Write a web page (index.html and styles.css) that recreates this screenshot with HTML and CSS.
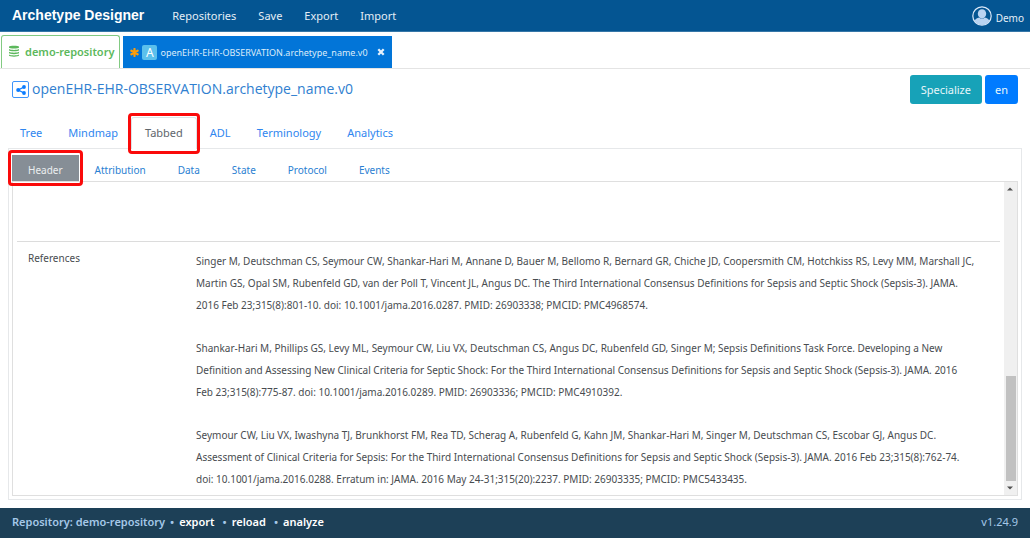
FILE: index.html
```html
<!DOCTYPE html>
<html lang="en">
<head>
<meta charset="utf-8">
<title>Archetype Designer</title>
<link rel="stylesheet" href="styles.css">
</head>
<body>
<header class="topbar">
  <a class="brand" href="#">Archetype Designer</a>
  <nav class="menu">
    <a href="#">Repositories</a>
    <a href="#">Save</a>
    <a href="#">Export</a>
    <a href="#">Import</a>
  </nav>
  <a class="user" href="#">
    <svg class="avatar" viewBox="0 0 20 20" aria-hidden="true">
      <circle cx="10" cy="10" r="9.2" fill="none" stroke="#dbe8f8" stroke-width="1.2"/>
      <ellipse cx="10" cy="7.800" rx="4.200" ry="4.600" fill="#b9d3f1"/>
      <path d="M2.600 15.200C3 12.800 5 12 7.200 11.400c1.600 1.600 4 1.600 5.600 0C15 12 17 12.800 17.400 15.200A9 9 0 0 1 2.600 15.200z" fill="#b9d3f1"/>
    </svg>
    <span>Demo</span>
  </a>
</header>

<nav class="documents">
  <a class="doc doc-repo" href="#">
    <svg class="icon-db" viewBox="0 0 10 12" aria-hidden="true">
      <path d="M0 1.700C0 .4 10 .4 10 1.700v.8C10 3.900 0 3.900 0 2.500zM0 4c2 1.200 8 1.200 10 0v1.300c0 1.400-10 1.400-10 0zM0 6.800c2 1.200 8 1.200 10 0v1.300c0 1.400-10 1.400-10 0zM0 9.600c2 1.200 8 1.200 10 0v.9c0 1.500-10 1.500-10 0z" fill="#5cb85c"/>
    </svg>
    <span>demo-repository</span>
  </a>
  <div class="doc doc-open">
    <svg class="icon-star" viewBox="0 0 10 10" aria-hidden="true">
      <path d="M5 1v8M1.500 3l7 4M8.500 3l-7 4" stroke="#ff9d0a" stroke-width="2.400" stroke-linecap="round"/>
    </svg>
    <span class="kind">A</span>
    <a href="#">openEHR-EHR-OBSERVATION.archetype_name.v0</a>
    <button class="close" type="button" aria-label="Close">
      <svg viewBox="0 0 8 8" aria-hidden="true"><path d="M1.300 1.300l5.400 5.400M6.700 1.300L1.300 6.700" stroke="#e6f1fc" stroke-width="2.300"/></svg>
    </button>
  </div>
</nav>

<main class="main">
  <div class="title-row">
    <button class="share" type="button" aria-label="Share">
      <svg viewBox="0 0 10 10" aria-hidden="true">
        <path d="M8 2L2.300 5L8 8" fill="none" stroke="#0a7cff" stroke-width="1.300"/>
        <circle cx="8" cy="2" r="1.900" fill="#0a7cff"/><circle cx="2.200" cy="5" r="2" fill="#0a7cff"/><circle cx="8" cy="8" r="1.900" fill="#0a7cff"/>
      </svg>
    </button>
    <h1 class="title">openEHR-EHR-OBSERVATION.archetype_name.v0</h1>
    <div class="actions">
      <button class="btn btn-teal" type="button">Specialize</button>
      <button class="btn btn-blue" type="button">en</button>
    </div>
  </div>

  <nav class="tabs">
    <a class="tab" href="#">Tree</a>
    <a class="tab" href="#">Mindmap</a>
    <a class="tab tab-active marked" href="#">Tabbed</a>
    <a class="tab" href="#">ADL</a>
    <a class="tab" href="#">Terminology</a>
    <a class="tab" href="#">Analytics</a>
  </nav>

  <section class="panel">
    <nav class="pills">
      <a class="pill pill-active marked" href="#">Header</a>
      <a class="pill" href="#">Attribution</a>
      <a class="pill" href="#">Data</a>
      <a class="pill" href="#">State</a>
      <a class="pill" href="#">Protocol</a>
      <a class="pill" href="#">Events</a>
    </nav>
    <div class="viewport">
      <div class="content">
        <div class="previous"></div>
        <div class="field">
          <h2 class="field-name">References</h2>
          <div class="field-value">
            <p>Singer M, Deutschman CS, Seymour CW, Shankar-Hari M, Annane D, Bauer M, Bellomo R, Bernard GR, Chiche JD, Coopersmith CM, Hotchkiss RS, Levy MM, Marshall JC,<br>Martin GS, Opal SM, Rubenfeld GD, van der Poll T, Vincent JL, Angus DC. The Third International Consensus Definitions for Sepsis and Septic Shock (Sepsis-3). JAMA.<br>2016 Feb 23;315(8):801-10. doi: 10.1001/jama.2016.0287. PMID: 26903338; PMCID: PMC4968574.</p>
            <p>Shankar-Hari M, Phillips GS, Levy ML, Seymour CW, Liu VX, Deutschman CS, Angus DC, Rubenfeld GD, Singer M; Sepsis Definitions Task Force. Developing a New<br>Definition and Assessing New Clinical Criteria for Septic Shock: For the Third International Consensus Definitions for Sepsis and Septic Shock (Sepsis-3). JAMA. 2016<br>Feb 23;315(8):775-87. doi: 10.1001/jama.2016.0289. PMID: 26903336; PMCID: PMC4910392.</p>
            <p>Seymour CW, Liu VX, Iwashyna TJ, Brunkhorst FM, Rea TD, Scherag A, Rubenfeld G, Kahn JM, Shankar-Hari M, Singer M, Deutschman CS, Escobar GJ, Angus DC.<br>Assessment of Clinical Criteria for Sepsis: For the Third International Consensus Definitions for Sepsis and Septic Shock (Sepsis-3). JAMA. 2016 Feb 23;315(8):762-74.<br>doi: 10.1001/jama.2016.0288. Erratum in: JAMA. 2016 May 24-31;315(20):2237. PMID: 26903335; PMCID: PMC5433435.</p>
          </div>
        </div>
      </div>
      <div class="scrollbar" aria-hidden="true">
        <svg class="arrow" viewBox="0 0 12 14"><path d="M3 8.500L6 5.500L9 8.500z" fill="#505050"/></svg>
        <div class="track"><div class="thumb"></div></div>
        <svg class="arrow" viewBox="0 0 12 14"><path d="M3 5.500L6 8.500L9 5.500z" fill="#505050"/></svg>
      </div>
    </div>
  </section>
</main>

<footer class="footer">
  <span>Repository: demo-repository</span>
  <span class="dot">•</span><a href="#">export</a>
  <span class="dot dot-wide">•</span><a href="#">reload</a>
  <span class="dot dot-wide">•</span><a href="#">analyze</a>
  <span class="version">v1.24.9</span>
</footer>
</body>
</html>
```
FILE: styles.css
```css
* { box-sizing: border-box; }

body {
  margin: 0;
  min-height: 100vh;
  display: flex;
  flex-direction: column;
  background: #fff;
  color: #484c50;
  font-family: "Noto Sans", "Open Sans", sans-serif;
  font-size: 12px;
}

a { color: inherit; text-decoration: none; }
button { font: inherit; cursor: pointer; }
svg { display: block; }

/* Top bar */
.topbar {
  display: flex;
  align-items: center;
  height: 32px;
  padding: 0 6px 0 12px;
  background: #045592;
  border-bottom: 1px solid #3577a8;
  color: #e4eef6;
}
.brand {
  padding-bottom: 2px;
  font-family: "Liberation Sans", Arial, sans-serif;
  font-size: 14px;
  font-weight: bold;
  color: #fff;
}
.menu { display: flex; gap: 22px; margin-left: 28px; }
.user {
  display: flex;
  align-items: center;
  gap: 4px;
  margin-left: auto;
  font-size: 10px;
}
.user span { padding-top: 5px; }
.avatar { width: 20px; height: 20px; }

/* Open documents */
.documents {
  display: flex;
  align-items: flex-end;
  gap: 3px;
  height: 37px;
  padding-left: 1px;
  border-bottom: 1px solid #e4e4e4;
}
.doc { display: flex; align-items: center; height: 32px; }
.doc-repo {
  height: 33px;
  gap: 6px;
  padding: 0 5px 2px 7px;
  border: 1px solid #82ca82;
  border-bottom: 0;
  border-radius: 3px 3px 0 0;
  color: #5cb85c;
  font-size: 11px;
  font-weight: 600;
}
.icon-db { width: 10px; height: 12px; }
.doc-open {
  gap: 3px;
  padding: 0 7px;
  background: #0275d8;
  color: #dcecfa;
  font-size: 9px;
}
.icon-star { width: 9px; height: 9px; }
.kind {
  width: 15px;
  height: 15px;
  border-radius: 2px;
  background: #5bc0ec;
  color: #fff;
  font-size: 12px;
  line-height: 15px;
  text-align: center;
}
.close { margin-left: 6px; padding: 0; border: 0; background: none; }
.close svg { width: 8px; height: 8px; }

/* Main area */
.main {
  flex: 1;
  display: flex;
  flex-direction: column;
  padding: 6px 8px 8px;
}
.title-row { display: flex; align-items: center; padding: 0 4px; }
.share {
  display: grid;
  place-items: center;
  width: 17px;
  height: 17px;
  padding: 0;
  border: 1px solid #3d95fb;
  border-radius: 2px;
  background: #fff;
}
.share svg { width: 10px; height: 10px; }
.title {
  margin: 0 0 2px 3px;
  color: #3080d0;
  font-family: "Open Sans", "Noto Sans", sans-serif;
  font-size: 14px;
  font-weight: 400;
  line-height: 20px;
}
.actions { display: flex; gap: 3px; margin-left: auto; }
.btn {
  height: 29px;
  padding: 0 10px;
  border: 0;
  border-radius: 3px;
  color: #e8f6fa;
}
.btn-teal { padding: 0 11px; background: #17a2b8; }
.btn-blue { background: #007bff; }

/* Tabs */
.menu, .tabs, .btn { font-size: 11px; }
.tabs { display: flex; margin: 13px 0 0 -1px; }
.tab {
  height: 31px;
  padding: 0 12px;
  border: 1px solid transparent;
  border-bottom: 0;
  color: #2f86ef;
  line-height: 30px;
}
.tab-active {
  margin-bottom: -1px;
  height: 32px;
  padding: 0 13px;
  border-color: #dee2e6;
  border-radius: 3px 3px 0 0;
  background: #fff;
  color: #60666c;
}
.marked { position: relative; }
.marked::after {
  content: "";
  position: absolute;
  inset: -5px -4px;
  border: 3px solid #fa0a0a;
  border-radius: 4px;
}

/* Panel */
.panel {
  flex: 1;
  display: flex;
  flex-direction: column;
  padding: 6px 3px 3px;
  border: 1px solid #e6e8ea;
}
.pills { display: flex; font-size: 10px; }
.pill {
  height: 26px;
  padding: 0 16px;
  color: #2a80d2;
  line-height: 30px;
}
.pill-active { background: #868e96; color: #eceef0; }
.viewport {
  flex: 1;
  display: flex;
  border: 1px solid #dfdfdf;
}
.content { flex: 1; padding-left: 4px; font-size: 10px; }
.previous { height: 60px; margin-right: 4px; border-bottom: 1px solid #dcdcdc; }
.field {
  display: grid;
  grid-template-columns: 168px 1fr;
  padding: 8px 0 0 11px;
}
.field-name { margin: 0; font-size: 10px; font-weight: 400; line-height: 16px; }
.field-value { line-height: 22px; white-space: nowrap; }
.field-value p { margin: 0 0 21px; }
.field-value p:last-child { margin: 0; }

.scrollbar {
  display: flex;
  flex-direction: column;
  width: 13px;
  background: #f0f0f0;
}
.arrow { width: 12px; height: 14px; }
.track {
  flex: 1;
  display: flex;
  flex-direction: column;
  justify-content: flex-end;
  padding: 0 1px 0 2px;
}
.thumb { height: 37%; background: #c1c1c1; }

/* Footer */
.footer {
  display: flex;
  align-items: center;
  height: 30px;
  padding: 0 12px 3px;
  background: #1d4057;
  color: #a5c8e8;
  font-size: 11px;
  font-weight: 600;
}
.footer a { color: #fff; }
.dot { margin: 0 5px; }
.dot-wide { margin-left: 8px; }
.version { margin-left: auto; font-weight: 400; }
```
